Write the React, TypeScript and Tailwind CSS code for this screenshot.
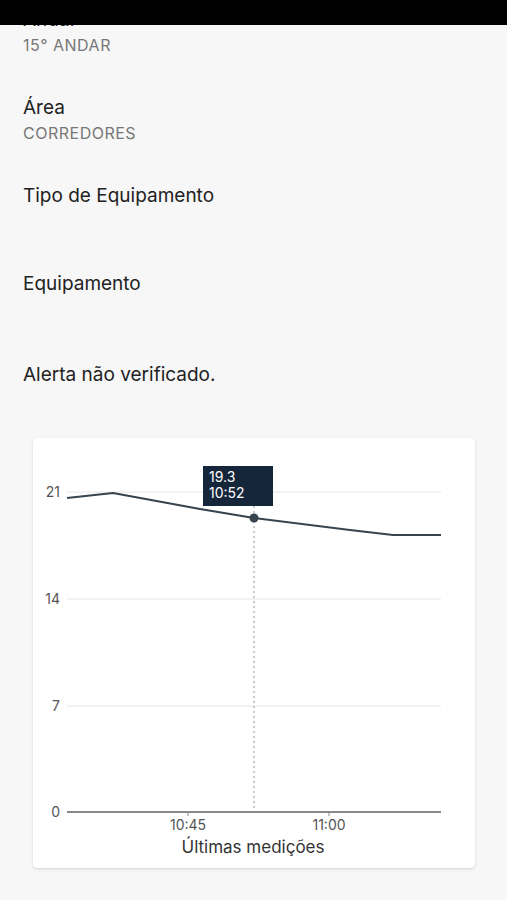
import React from "react";

const fields = [
  { label: "Andar", value: "15° ANDAR" },
  { label: "Área", value: "CORREDORES" },
  { label: "Tipo de Equipamento", value: "" },
  { label: "Equipamento", value: "" },
];

const points: [number, number][] = [
  [34, 60],
  [80, 55],
  [167, 71],
  [221, 80],
  [317, 92],
  [360, 97],
  [408, 97],
];

const Chart = () => {
  const grid = [
    { v: "21", y: 54 },
    { v: "14", y: 161 },
    { v: "7", y: 268 },
  ];
  return (
    <svg width="442" height="430" className="block" style={{ fontFamily: "Inter, sans-serif" }}>
      {grid.map((g) => (
        <g key={g.v}>
          <line x1="34" x2="408" y1={g.y} y2={g.y} stroke="#e6e6e6" strokeWidth="1" />
          <text x="27" y={g.y + 5} textAnchor="end" fontSize="14" fill="#555">
            {g.v}
          </text>
        </g>
      ))}
      <text x="27" y="379" textAnchor="end" fontSize="14" fill="#555">
        0
      </text>
      <line x1="221" x2="221" y1="68" y2="374" stroke="#bbb" strokeWidth="1.5" strokeDasharray="2 3" />
      <line x1="34" x2="408" y1="374" y2="374" stroke="#888" strokeWidth="2" />
      <line x1="155" x2="155" y1="374" y2="378" stroke="#888" strokeWidth="1" />
      <line x1="296" x2="296" y1="374" y2="378" stroke="#888" strokeWidth="1" />
      <text x="155" y="392" textAnchor="middle" fontSize="14" fill="#555">
        10:45
      </text>
      <text x="296" y="392" textAnchor="middle" fontSize="14" fill="#555">
        11:00
      </text>
      <text x="220" y="415" textAnchor="middle" fontSize="17" fill="#333">
        Últimas medições
      </text>
      <polyline
        points={points.map((p) => p.join(",")).join(" ")}
        fill="none"
        stroke="#37444f"
        strokeWidth="2"
        strokeLinejoin="round"
      />
      <circle cx="221" cy="80" r="4.5" fill="#37444f" />
      <rect x="170" y="28" width="70" height="40" fill="#15253a" />
      <text x="176" y="44" fontSize="14" fill="#fff">
        19.3
      </text>
      <text x="176" y="60" fontSize="14" fill="#fff">
        10:52
      </text>
    </svg>
  );
};

export default function App() {
  return (
    <div
      className="relative min-h-screen bg-[#f7f7f7] overflow-hidden"
      style={{ fontFamily: "Inter, Roboto, sans-serif" }}
    >
      <div className="absolute top-0 left-0 right-0 h-[25px] bg-black z-10" />
      <div className="flex flex-col pt-[8px] px-[23px]">
        {fields.map((f) => (
          <div key={f.label} className="flex flex-col gap-[3px] pb-[41px]">
            <p className="text-[19px] leading-[24px] text-[#222]">{f.label}</p>
            <p className="text-[16px] leading-[20px] min-h-[20px] text-[#777] tracking-[0.5px]">
              {f.value}
            </p>
          </div>
        ))}
        <p className="mt-[3px] text-[19px] leading-[24px] text-[#222]">Alerta não verificado.</p>
      </div>
      <div className="pl-[33px] pr-[32px] pt-[51px] pb-8">
        <div className="bg-white rounded-[4px] shadow-[0_1px_3px_rgba(0,0,0,0.15)]">
          <Chart />
        </div>
      </div>
    </div>
  );
}
